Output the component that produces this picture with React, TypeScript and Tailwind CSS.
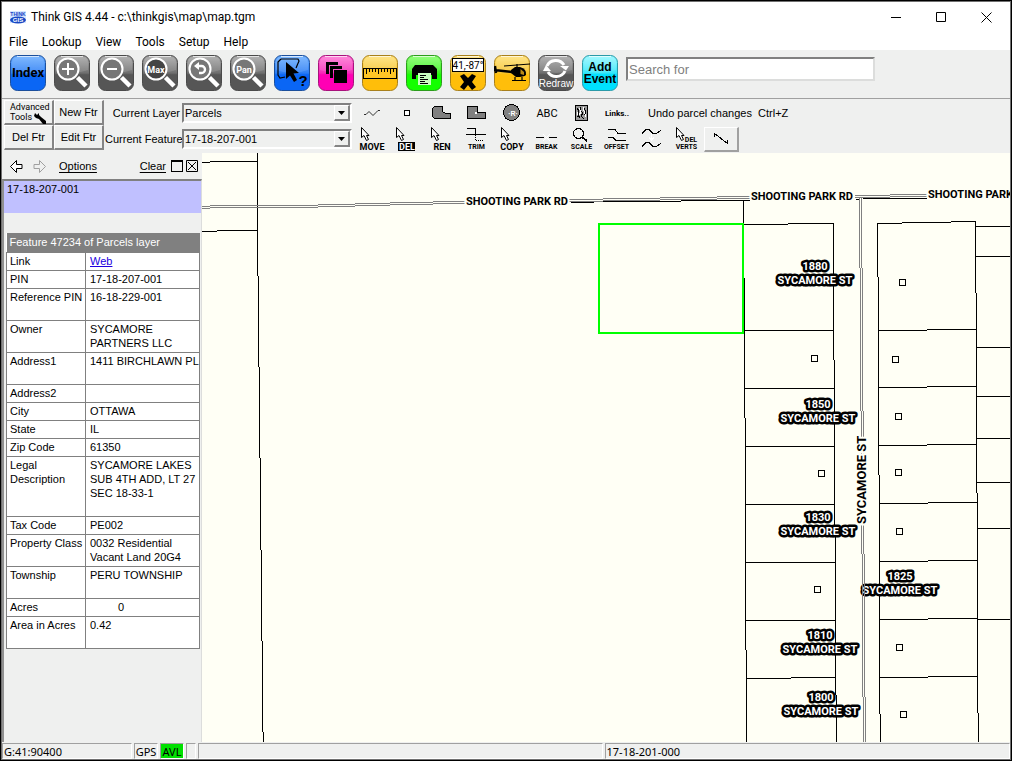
import React from 'react';

const MAP_BG = '#fffff5';

type Tone = 'blue' | 'gray' | 'pink' | 'gold' | 'green' | 'cyan';

const tones: Record<Tone, [string, string, string, string]> = {
  blue: ['#6fb1ff', '#2b7df5', '#0a66f5', '#1b4f9c'],
  gray: ['#a9a9a9', '#6f6f6f', '#565656', '#4a4a4a'],
  pink: ['#ff7ad4', '#f52ab8', '#ff00b4', '#a8127c'],
  gold: ['#ffe27a', '#f7c32c', '#ffbe0a', '#a8801c'],
  green: ['#86ff6c', '#3af01f', '#14ff00', '#2c9c1c'],
  cyan: ['#9af8ff', '#35e6fa', '#00e0ff', '#2b9aa8'],
};

function Tile({ tone, label, children }: { tone: Tone; label: string; children: React.ReactNode }) {
  const [top, mid, low, edge] = tones[tone];
  const id = `tile-${tone}-${label.replace(/\s/g, '')}`;
  return (
    <button type="button" aria-label={label} className="block size-9 shrink-0">
      <svg viewBox="0 0 36 36" className="size-9">
        <defs>
          <linearGradient id={id} x1="0" y1="0" x2="0" y2="1">
            <stop offset="0" stopColor={top} />
            <stop offset="0.5" stopColor={mid} />
            <stop offset="0.55" stopColor={low} />
            <stop offset="1" stopColor={low} />
          </linearGradient>
        </defs>
        <rect x="0.5" y="0.5" width="35" height="35" rx="7" fill={`url(#${id})`} stroke={edge} />
        <path d="M7 1.5H29" stroke="#fff" strokeOpacity="0.7" />
        <path d="M2 8Q2 2 8 2H28Q34 2 34 8V15Q18 21 2 15Z" fill="#fff" fillOpacity="0.13" />
        {children}
      </svg>
    </button>
  );
}

function Lens({ children, dark }: { children?: React.ReactNode; dark?: boolean }) {
  return (
    <g>
      <path d="M23.5 22.5L32 31" stroke="#fff" strokeWidth="4.5" />
      <circle cx="14" cy="14" r="10.5" fill={dark ? '#444' : '#777'} stroke="#fff" strokeWidth="2" />
      {children}
    </g>
  );
}

function MainToolbar() {
  return (
    <div className="flex h-12 items-start gap-2 bg-[#eff0ef] pt-[5px] pl-2">
      <Tile tone="blue" label="Index">
        <text x="18" y="22" textAnchor="middle" className="font-['Roboto'] text-[13px] font-bold">Index</text>
      </Tile>
      <Tile tone="gray" label="Zoom in">
        <Lens><path d="M8 14H20M14 8V20" stroke="#fff" strokeWidth="2" /></Lens>
      </Tile>
      <Tile tone="gray" label="Zoom out">
        <Lens><path d="M9 14H19" stroke="#fff" strokeWidth="2" /></Lens>
      </Tile>
      <Tile tone="gray" label="Zoom max">
        <Lens dark>
          <text x="14" y="18" textAnchor="middle" fill="#fff" className="font-['Roboto'] text-[9px] font-bold">Max</text>
        </Lens>
      </Tile>
      <Tile tone="gray" label="Previous view">
        <Lens>
          <path d="M11 11H15.5A3.5 3.5 0 0 1 15.5 18H13" fill="none" stroke="#fff" strokeWidth="2.4" />
          <path d="M8 11L13 7V15Z" fill="#fff" />
        </Lens>
      </Tile>
      <Tile tone="gray" label="Pan">
        <Lens>
          <text x="14" y="18" textAnchor="middle" fill="#fff" className="font-['Roboto'] text-[9px] font-bold">Pan</text>
        </Lens>
      </Tile>
      <Tile tone="blue" label="Identify">
        <path d="M7 4H24L25 6L22 13M11 22L6 23L4 20V7L7 4" fill="none" stroke="#000" strokeWidth="1.2" />
        <path d="M12 7V24L16 20.5L20 27L23 25L19.5 18.5L25 18Z" fill="#000" />
        <text x="29" y="31" textAnchor="middle" className="font-['Liberation_Sans'] text-[15px] font-bold">?</text>
      </Tile>
      <Tile tone="pink" label="Layers">
        <path d="M8 7H20V10H11V19H8Z" fill="#000" />
        <path d="M12 11H24V14H15V23H12Z" fill="#000" />
        <rect x="16" y="15" width="13" height="13" fill="#000" />
      </Tile>
      <Tile tone="gold" label="Measure">
        <rect x="1.5" y="13.5" width="33" height="10" fill="#ffc526" stroke="#000" />
        <path d="M4.5 14V19M7.5 14V17M10.5 14V17M13.5 14V17M16.5 14V19M19.5 14V17M22.5 14V17M25.5 14V17M28.5 14V19M31.5 14V17" stroke="#000" />
      </Tile>
      <Tile tone="green" label="Print">
        <path d="M9 10H27L31 14V24H26V20H10V24H6V14Z" fill="#000" />
        <rect x="12" y="18" width="13" height="12" fill="#c9ffc0" />
        <path d="M14 20.5H20M14 22.5H18M14 24.5H22M14 26.5H19M14 28.5H22" stroke="#000" />
      </Tile>
      <Tile tone="gold" label="Coordinates">
        <rect x="2.5" y="3.5" width="31" height="13" fill="#fff" stroke="#000" />
        <text x="18" y="14" textAnchor="middle" className="font-['Roboto'] text-[10px]">41,-87°</text>
        <path d="M10 21L14 19L18 23L22 19L26 21L22 27L26 32L22 35L18 30L14 35L10 32L14 27Z" fill="#000" />
      </Tile>
      <Tile tone="gold" label="Helicopter view">
        <path d="M1 11L2 18M0 15L18 17" stroke="#000" strokeWidth="2.4" />
        <path d="M10 11L36 9" stroke="#000" strokeWidth="1" />
        <path d="M17 15L21 12H26Q33 14 32 20Q30 22 22 22L17 18Z" fill="#000" />
        <path d="M26.5 14L30 17L30 20L26.5 19Z" fill="#b98a16" />
        <path d="M23 9V13M21 22V25M28 22V25M18 25.5H32" stroke="#000" strokeWidth="1.2" />
      </Tile>
      <Tile tone="gray" label="Redraw">
        <path d="M9 11A9.5 9 0 0 1 26 10" fill="none" stroke="#fff" strokeWidth="3" />
        <path d="M27 16A9.5 9 0 0 1 10 17" fill="none" stroke="#fff" strokeWidth="3" />
        <path d="M22 11H31L28 15.5Z" fill="#fff" />
        <path d="M5 16L8 10L13 16Z" fill="#fff" />
        <text x="18" y="32" textAnchor="middle" fill="#fff" className="font-['Liberation_Sans'] text-[10px]">Redraw</text>
      </Tile>
      <Tile tone="cyan" label="Add Event">
        <text x="18" y="16" textAnchor="middle" className="font-['Liberation_Sans'] text-[12px] font-bold">Add</text>
        <text x="18" y="28" textAnchor="middle" className="font-['Liberation_Sans'] text-[12px] font-bold">Event</text>
      </Tile>
      <input
        aria-label="Search for"
        placeholder="Search for"
        className="mt-[2px] h-6 w-[249px] border-2 border-t-[#808080] border-r-[#dcdddc] border-b-[#dcdddc] border-l-[#808080] bg-white px-px font-['Liberation_Sans'] text-[13px] outline-none placeholder:text-[#808080]"
      />
    </div>
  );
}

const raised = 'border-r-2 border-b-2 border-t border-l border-t-white border-l-white border-r-[#858585] border-b-[#858585]';

function Combo({ id, label, value }: { id: string; label: string; value: string }) {
  return (
    <div className="flex h-[26px] items-center gap-[2px]">
      <label htmlFor={id} className="w-[75px] text-right whitespace-nowrap">{label}</label>
      <div className="relative h-5 w-[170px]">
        <select
          id={id}
          defaultValue={value}
          className="block h-5 w-full appearance-none border-2 border-t-[#808080] border-r-white border-b-white border-l-[#808080] bg-[#eff0ef] px-px leading-4 outline-none"
        >
          <option>{value}</option>
        </select>
        <span className={`pointer-events-none absolute top-[2px] right-[2px] flex h-4 w-4 items-center justify-center bg-[#eff0ef] ${raised}`}>
          <svg viewBox="0 0 7 4" className="h-1 w-[7px]"><path d="M0 0H7L3.5 4Z" /></svg>
        </span>
      </div>
    </div>
  );
}

function PixelTool({ label, children }: { label: string; children: React.ReactNode }) {
  return (
    <button type="button" aria-label={label} className="flex h-[26px] w-[35px] items-center justify-center">
      <svg viewBox="0 0 35 26" className="h-[26px] w-[35px]" fill="none" stroke="#000" shapeRendering="crispEdges">
        {children}
      </svg>
    </button>
  );
}

function Cursor() {
  return <path d="M7.5 1.5V11.5L10 9.5L12.5 14.5L14.5 13.5L12.5 9.5H15Z" fill="#fff" shapeRendering="auto" />;
}

function Caption({ children, invert }: { children: string; invert?: boolean }) {
  return (
    <text x="17.5" y="23" textAnchor="middle" stroke="none" fill={invert ? '#fff' : '#000'} className="font-['Roboto'] text-[7px] font-bold">
      {children}
    </text>
  );
}

function BigCaption({ children, invert }: { children: string; invert?: boolean }) {
  return (
    <text x="18" y="24" textAnchor="middle" stroke="none" fill={invert ? '#fff' : '#000'} className="font-['Roboto'] text-[9px] font-bold">
      {children}
    </text>
  );
}

function EditTools() {
  return (
    <div className="flex flex-col">
      <div className="flex items-center">
        <PixelTool label="Line"><path d="M10 14.5H12L15 11.5L19 15.5L22 12.5L24 10.5H26" shapeRendering="auto" strokeWidth="0.8" /></PixelTool>
        <PixelTool label="Point"><rect x="15.5" y="10.5" width="5" height="5" fill="#fff" /></PixelTool>
        <PixelTool label="Polygon"><path d="M10.5 6.5H18.5V11.5L21.5 13.5H26.5V18.5H10.5L8.5 16.5V8.5Z" fill="#808080" /></PixelTool>
        <PixelTool label="Box">
          <path d="M8.5 6.5H18.5V12.5H26.5V18.5H8.5Z" fill="#808080" />
          <rect x="16" y="12" width="2" height="2" fill="#fff" stroke="none" />
        </PixelTool>
        <PixelTool label="Circle">
          <circle cx="17.5" cy="12.5" r="8" fill="#808080" />
          <text x="19" y="16" textAnchor="middle" stroke="none" fill="#fff" className="font-['Liberation_Sans'] text-[7px] font-bold">·R·</text>
        </PixelTool>
        <PixelTool label="Text">
          <text x="18" y="17" textAnchor="middle" stroke="none" fill="#000" className="font-['Roboto'] text-[11px]">ABC</text>
        </PixelTool>
        <PixelTool label="Image">
          <rect x="11.5" y="5.5" width="12" height="15" fill="#9a9a9a" strokeWidth="1.5" />
          <path d="M13 8L15 11L14 14L16 18M17 7L16 10L19 13L17 16L20 19M20 8L22 12L20 15M13 17L15 16" />
          <path d="M15 8L17 12L15 15M19 7L20 11L22 17M13 12V15" stroke="#fff" />
        </PixelTool>
        <PixelTool label="Links">
          <text x="18" y="16" textAnchor="middle" stroke="none" fill="#000" className="font-['Roboto'] text-[8px] font-bold">Links..</text>
        </PixelTool>
        <p className="pl-[14px] whitespace-pre">Undo parcel changes  Ctrl+Z</p>
      </div>
      <div className="flex items-center">
        <PixelTool label="Move"><Cursor /><BigCaption>MOVE</BigCaption></PixelTool>
        <PixelTool label="Delete"><Cursor /><rect x="9" y="16" width="17" height="9" fill="#000" stroke="none" /><BigCaption invert>DEL</BigCaption></PixelTool>
        <PixelTool label="Rename"><Cursor /><BigCaption>REN</BigCaption></PixelTool>
        <PixelTool label="Trim"><path d="M8 2.5H16.5V8.5M7 8.5H27" /><path d="M16.5 9V14.5H25" strokeDasharray="1 1" /><Caption>TRIM</Caption></PixelTool>
        <PixelTool label="Copy"><Cursor /><BigCaption>COPY</BigCaption></PixelTool>
        <PixelTool label="Break"><path d="M14 8L21 15M21 8L14 15" stroke="#fff" /><path d="M7 11.5H15M20 11.5H28" /><Caption>BREAK</Caption></PixelTool>
        <PixelTool label="Scale"><circle cx="14.5" cy="7.5" r="5" /><path d="M18 11L23 15" strokeWidth="2" /><Caption>SCALE</Caption></PixelTool>
        <PixelTool label="Offset"><path d="M9 3.5H16L19 7.5H27M9 11.5H14L17 14.5H27" /><path d="M14 11L19 5" stroke="#fff" /><Caption>OFFSET</Caption></PixelTool>
        <PixelTool label="Smooth"><path d="M8 7.5L12 3.5H15L19 7.5H22L27 4.5M8 20.5L12 16.5H15L19 20.5H22L27 17.5" /><path d="M17.5 7V14M15 11.5L17.5 14L20 11.5" stroke="#fff" /></PixelTool>
        <PixelTool label="Delete vertices">
          <Cursor />
          <text x="22" y="16" textAnchor="middle" stroke="none" fill="#000" className="font-['Roboto'] text-[7px] font-bold">DEL</text>
          <Caption>VERTS</Caption>
        </PixelTool>
        <button type="button" aria-label="Segment" className="flex h-[25px] w-[35px] items-center justify-center border-t border-r-2 border-b-2 border-l border-t-white border-r-[#a0a0a0] border-b-[#a0a0a0] border-l-white">
          <svg viewBox="0 0 14 12" className="h-3 w-[14px]" fill="none" stroke="#000" shapeRendering="crispEdges"><path d="M0.5 4V0.5L13.5 10.5V7" /></svg>
        </button>
      </div>
    </div>
  );
}

function FeatureToolbar() {
  return (
    <div className="flex h-[55px] items-start border-t border-[#a0a0a0] bg-[#eff0ef] pt-px pl-[2px]">
      <div className="grid grid-cols-[50px_50px]">
        <button type="button" className={`h-[25px] text-left ${raised}`}>
          <span className="flex items-center pl-[5px] font-['Roboto'] text-[9px] leading-[10px]">
            <span className="relative">
              Advanced<br />Tools
              <svg viewBox="0 0 12 12" className="absolute right-1 bottom-[-2px] size-3">
                <path d="M1 1L3 3L5 1V3L7 5L12 9V12H9L5 7L2 6L0 4Z" />
              </svg>
            </span>
          </span>
        </button>
        <button type="button" className={`h-[25px] ${raised}`}>New Ftr</button>
        <button type="button" className={`h-[25px] ${raised}`}>Del Ftr</button>
        <button type="button" className={`h-[25px] ${raised}`}>Edit Ftr</button>
      </div>
      <div className="pl-[1px]">
        <Combo id="layer" label="Current Layer" value="Parcels" />
        <Combo id="feature" label="Current Feature" value="17-18-207-001" />
      </div>
      <div className="pl-[2px]"><EditTools /></div>
    </div>
  );
}

const rows: [string, React.ReactNode, string][] = [
  ['Link', <a key="web" href="#web" className="text-[#2000e0] underline">Web</a>, 'h-[18px]'],
  ['PIN', '17-18-207-001', 'h-[18px]'],
  ['Reference PIN', '16-18-229-001', 'h-[32px]'],
  ['Owner', <>SYCAMORE<br />PARTNERS LLC</>, 'h-[32px]'],
  ['Address1', '1411 BIRCHLAWN PL', 'h-[32px]'],
  ['Address2', '', 'h-[18px]'],
  ['City', 'OTTAWA', 'h-[18px]'],
  ['State', 'IL', 'h-[18px]'],
  ['Zip Code', '61350', 'h-[18px]'],
  ['Legal Description', <>SYCAMORE LAKES<br />SUB 4TH ADD, LT 27<br />SEC 18-33-1</>, 'h-[60px]'],
  ['Tax Code', 'PE002', 'h-[18px]'],
  ['Property Class', <>0032 Residential<br />Vacant Land 20G4</>, 'h-[32px]'],
  ['Township', 'PERU TOWNSHIP', 'h-[32px]'],
  ['Acres', <span key="acres" className="pl-7">0</span>, 'h-[18px]'],
  ['Area in Acres', '0.42', 'h-[32px]'],
];

function SidePanel() {
  return (
    <aside className="flex w-[200px] shrink-0 flex-col bg-[#eff0ef]">
      <div className="flex h-[26px] items-center pr-1 pl-2">
        <button type="button" aria-label="Back">
          <svg viewBox="0 0 13 13" className="size-[13px]" fill="#fff" stroke="#000"><path d="M0.5 6.5L6.5 0.5V4.5H12V8.5H6.5V12.5Z" /></svg>
        </button>
        <button type="button" aria-label="Forward" className="ml-[10px]">
          <svg viewBox="0 0 13 13" className="size-[13px]" fill="none" stroke="#a0a0a0"><path d="M12.5 6.5L6.5 0.5V4.5H1V8.5H6.5V12.5Z" /></svg>
        </button>
        <button type="button" className="ml-[13px] underline underline-offset-2">Options</button>
        <button type="button" className="mr-[5px] ml-auto underline underline-offset-2">Clear</button>
        <button type="button" aria-label="Maximize panel" className="mr-[3px]">
          <svg viewBox="0 0 12 12" className="size-3" fill="none" stroke="#000" shapeRendering="crispEdges"><path d="M0.5 0.5H11.5V11.5H0.5ZM0 1.5H12" /></svg>
        </button>
        <button type="button" aria-label="Close panel">
          <svg viewBox="0 0 12 12" className="size-3" fill="none" stroke="#000"><path d="M0.5 0.5H11.5V11.5H0.5ZM2 2L10 10M10 2L2 10" /></svg>
        </button>
      </div>
      <div className="flex-1 border-t-2 border-r border-l-2 border-t-[#808080] border-r-[#dcdddc] border-l-[#909090]">
        <div className="h-8 bg-[#c0c0ff] pl-[3px] leading-4">17-18-207-001</div>
        <div className="pt-5 pr-px pl-[2px]">
          <table className="w-full table-fixed border-collapse bg-white text-left">
            <colgroup><col className="w-[79px]" /><col /></colgroup>
            <thead>
              <tr className="h-[19px]"><th colSpan={2} className="bg-[#808080] px-[3px] font-normal text-white">Feature 47234 of Parcels layer</th></tr>
            </thead>
            <tbody>
              {rows.map(([name, value, height]) => (
                <tr key={name} className={height}>
                  <th scope="row" className="border border-[#808080] py-px pr-0 pl-[3px] align-top leading-[14px] font-normal">{name}</th>
                  <td className="border border-[#808080] py-px pr-0 pl-1 align-top leading-[14px] whitespace-nowrap">{value}</td>
                </tr>
              ))}
            </tbody>
          </table>
        </div>
      </div>
    </aside>
  );
}

const parcelLines = [
  'M257.5 153V276M258.5 276V367M259.5 367V458M260.5 458V550M261.5 550V641M262.5 641V732M263.5 732V742',
  'M201 162.5H210M210 161.5H257M201 231.5H217M217 230.5H257',
  'M571 202.5H594M603 201.5H681M681 200.5H750M856 199.5H860M863 198.5H927',
  'M743.5 201V278M744.5 278V418M745.5 418V650M746.5 650V742',
  'M833.5 223V360M834.5 360V537M835.5 537V695M836.5 695V742',
  'M744 224.5H788M788 223.5H834M744 330.5H834M744 388.5H835M745 446.5H835M745 504.5H835M745 562.5H836M745 620.5H836M746 678.5H791M791 677.5H836',
  'M877.5 223V277M878.5 277V475M879.5 475V714M880.5 714V742',
  'M975.5 221V293M976.5 293V493M977.5 493V713M978.5 713V742',
  'M877 223.5H902M902 222.5H951M951 221.5H976M878 330.5H927M927 329.5H976M878 387.5H927M927 386.5H976M878 445.5H927M927 444.5H976',
  'M879 503.5H928M928 502.5H977M879 561.5H928M928 560.5H977M879 619.5H928M928 618.5H977M879 677.5H928M928 676.5H977',
  'M976 226.5H2000M976 256.5H2000M976 347.5H2000M976 396.5H2000M977 438.5H2000M977 482.5H2000M978 528.5H2000M978 619.5H2000',
].join('');

const roads = [
  'M201 206.5H210M201 208.5H210M210 205.5H318M210 207.5H318M318 204.5H355M318 206.5H355M355 203.5H390M355 205.5H390M390 202.5H433M390 204.5H433M433 201.5H467M433 203.5H467',
  'M569 199.5H603M569 201.5H603M603 198.5H660M603 200.5H660M660 197.5H717M660 199.5H717M717 196.5H751M717 198.5H751',
  'M855 195.5H890M855 197.5H890M890 194.5H928M890 196.5H928',
  'M859.5 197V268M861.5 197V268M860.5 268V411M862.5 268V411M861.5 411V554M863.5 411V554M862.5 554V697M864.5 554V697M863.5 697V742M865.5 697V742',
].join('');

const markers = [[902, 282], [814, 358], [895, 359], [898, 416], [821, 473], [898, 472], [899, 531], [817, 589], [899, 647], [903, 714]];

const addresses: [string, number, number][] = [
  ['1880', 815, 270], ['1850', 818, 408], ['1830', 818, 521], ['1825', 900, 580], ['1810', 820, 639], ['1800', 821, 701],
];

function MapView() {
  return (
    <main className="min-w-0 flex-1 overflow-hidden bg-[#fffff5]">
      <svg className="block h-full w-full" role="img" aria-label="Parcel map">
        <g transform="translate(-202 -153)" fill="none" stroke="#000">
          <path d={parcelLines} shapeRendering="crispEdges" />
          {markers.map(([x, y]) => (
            <rect key={`${x}-${y}`} x={x - 2.5} y={y - 2.5} width="6" height="6" fill={MAP_BG} shapeRendering="crispEdges" />
          ))}
          <g className="font-['Roboto'] text-[11px] font-bold" fill="#fff" strokeWidth="5" strokeLinejoin="round" paintOrder="stroke" textAnchor="middle">
            {addresses.map(([n, x, y]) => (
              <React.Fragment key={n}>
                <text x={x} y={y}>{n}</text>
                <text x={x} y={y + 14}>SYCAMORE ST</text>
              </React.Fragment>
            ))}
          </g>
          <path d={roads} stroke="#808080" shapeRendering="crispEdges" />
          <rect x="599" y="224" width="144" height="109" stroke="#00ff00" strokeWidth="2" shapeRendering="crispEdges" />
          <g className="font-['Roboto'] font-bold" fill="#000" stroke={MAP_BG} strokeWidth="4" paintOrder="stroke">
            <text x="466" y="205" className="text-[11px]">SHOOTING PARK RD</text>
            <text x="751" y="200" className="text-[11px]">SHOOTING PARK RD</text>
            <text x="928" y="198" className="text-[11px]">SHOOTING PARK RD</text>
            <text transform="translate(866 524) rotate(-90)" className="text-[13px]">SYCAMORE ST</text>
          </g>
        </g>
      </svg>
    </main>
  );
}

const cell = 'border border-t-[#a0a0a0] border-l-[#a0a0a0] border-r-white border-b-white';

function StatusBar() {
  return (
    <footer className="flex h-[17px] gap-[2px] bg-[#eff0ef] pt-px font-['Noto_Sans'] text-[11px] leading-[15px]">
      <div className={`w-[130px] pl-px ${cell}`}>G:41:90400</div>
      <div className={`w-6 text-center ${cell}`}>GPS</div>
      <div className={`w-6 bg-[#00e000] text-center ${cell}`}>AVL</div>
      <div className={`w-[10px] ${cell}`} />
      <div className={`flex-1 ${cell}`} />
      <div className={`flex-1 pl-px ${cell}`}>17-18-201-000</div>
    </footer>
  );
}

export default function App() {
  return (
    <div className="flex h-screen flex-col overflow-hidden border border-black bg-white font-['Liberation_Sans',sans-serif] text-[11px] leading-4 text-black">
      <div className="flex min-h-0 flex-1 flex-col border border-[#707070]">
        <header className="flex h-[30px] items-center pl-2 font-['Roboto'] text-[12px]">
          <svg viewBox="0 0 16 13" className="mr-[5px] h-[13px] w-4">
            <rect width="16" height="12" fill="#d5e6ff" />
            <text x="8" y="5" textAnchor="middle" fill="#1747c4" className="font-['Liberation_Sans'] text-[5px] font-bold">THINK</text>
            <ellipse cx="8" cy="9" rx="8" ry="3.5" fill="#1747c4" />
            <text x="8" y="11" textAnchor="middle" fill="#fff" className="font-['Liberation_Sans'] text-[6px] font-bold">GIS</text>
          </svg>
          <h1>Think GIS 4.44 - c:\thinkgis\map\map.tgm</h1>
          <div className="ml-auto flex items-center">
            <button type="button" aria-label="Minimize" className="flex h-7 w-[45px] items-center justify-center">
              <svg viewBox="0 0 10 10" className="size-[10px]" stroke="#000"><path d="M0 5.5H10" /></svg>
            </button>
            <button type="button" aria-label="Maximize" className="flex h-7 w-[45px] items-center justify-center">
              <svg viewBox="0 0 10 10" className="size-[10px]" stroke="#000" fill="none"><path d="M0.5 0.5H9.5V9.5H0.5Z" /></svg>
            </button>
            <button type="button" aria-label="Close" className="flex h-7 w-[47px] items-center justify-center">
              <svg viewBox="0 0 11 11" className="size-[11px]" stroke="#000"><path d="M0.5 0.5L10.5 10.5M10.5 0.5L0.5 10.5" /></svg>
            </button>
          </div>
        </header>
        <nav className="flex h-[18px] gap-[14px] pl-[7px] font-['Roboto'] text-[12px] leading-5">
          {['File', 'Lookup', 'View', 'Tools', 'Setup', 'Help'].map((item) => (
            <button key={item} type="button">{item}</button>
          ))}
        </nav>
        <MainToolbar />
        <FeatureToolbar />
        <div className="flex min-h-0 flex-1">
          <SidePanel />
          <MapView />
        </div>
        <StatusBar />
      </div>
    </div>
  );
}
